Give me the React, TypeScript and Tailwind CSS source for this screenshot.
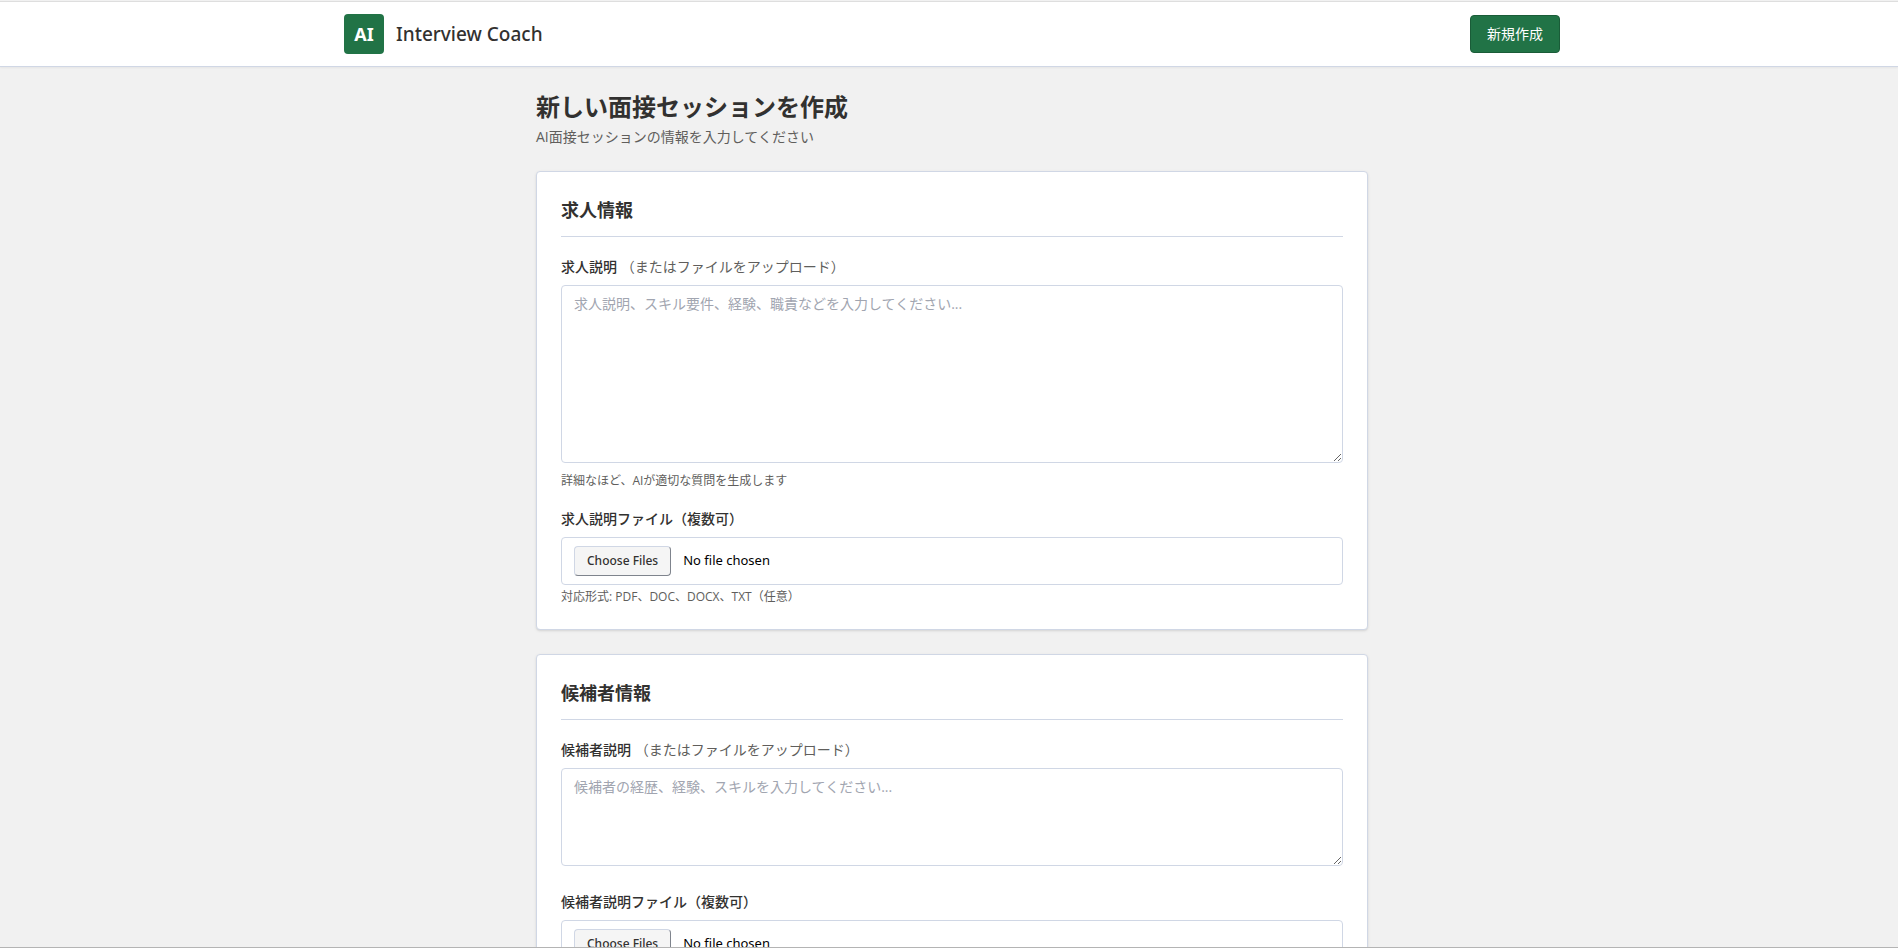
import React from "react";

type SectionProps = {
	id: string;
	title: string;
	label: string;
	placeholder: string;
	rows: number;
	hint?: string;
	fileLabel: string;
};

const sections: SectionProps[] = [
	{
		id: "job",
		title: "求人情報",
		label: "求人説明",
		placeholder: "求人説明、スキル要件、経験、職責などを入力してください...",
		rows: 8,
		hint: "詳細なほど、AIが適切な質問を生成します",
		fileLabel: "求人説明ファイル（複数可）",
	},
	{
		id: "candidate",
		title: "候補者情報",
		label: "候補者説明",
		placeholder: "候補者の経歴、経験、スキルを入力してください...",
		rows: 4,
		fileLabel: "候補者説明ファイル（複数可）",
	},
];

function Header() {
	return (
		<header className="mt-px shrink-0 border-y border-t-[#dedede] border-b-[#d0d7e5] bg-white pl-1.5 font-['Noto_Sans','Noto_Sans_CJK_JP',sans-serif] shadow-xs">
			<div className="mx-auto flex h-16 max-w-7xl items-center justify-between px-8">
				<a href="#" className="flex items-center gap-3">
					<span className="flex size-10 items-center justify-center rounded-sm bg-[#217346] text-lg font-bold text-white">
						AI
					</span>
					<span className="text-[19px] font-medium text-[#323130]">Interview Coach</span>
				</a>
				<button
					type="button"
					className="rounded-sm border border-[#1a5c38] bg-[#217346] px-4 py-2 text-sm text-white"
				>
					新規作成
				</button>
			</div>
		</header>
	);
}

function FormSection({ id, title, label, placeholder, rows, hint, fileLabel }: SectionProps) {
	return (
		<section className="rounded-sm border border-[#d0d7e5] bg-white p-6 shadow-sm">
			<h2 className="border-b border-[#d0d7e5] pb-3 text-lg leading-7 font-semibold">{title}</h2>

			<div className="mt-5 flex flex-col gap-5">
				<div>
					<label htmlFor={`${id}-text`} className="mb-2 block text-sm font-medium">
						{label} <span className="font-normal text-[#605e5c]">（またはファイルをアップロード）</span>
					</label>
					<textarea
						id={`${id}-text`}
						rows={rows}
						placeholder={placeholder}
						className="mb-1.5 block w-full rounded-sm border border-[#d0d7e5] bg-white px-3 py-2 text-sm placeholder:text-[#a1a5b0]"
					/>
					{hint && <p className="mt-2.5 text-xs text-[#605e5c]">{hint}</p>}
				</div>

				<div>
					<label htmlFor={`${id}-files`} className="mb-2 block text-sm font-medium">
						{fileLabel}
					</label>
					<input
						id={`${id}-files`}
						type="file"
						multiple
						accept=".pdf,.doc,.docx,.txt"
						className="block w-full rounded-sm border border-[#d0d7e5] bg-white px-3 py-2 font-['Noto_Sans','Noto_Sans_CJK_JP',sans-serif] text-[13px] text-black file:mr-3 file:rounded-sm file:border file:border-t-[#d0d7e5] file:border-r-[#7f848d] file:border-b-[#7f848d] file:border-l-[#d0d7e5] file:bg-[#f5f5f5] file:px-3 file:py-1.5 file:text-xs file:font-medium file:text-[#323130]"
					/>
					<p className="mt-1 text-xs text-[#605e5c]">対応形式: PDF、DOC、DOCX、TXT（任意）</p>
				</div>
			</div>
		</section>
	);
}

export default function App() {
	return (
		<div className="flex h-screen flex-col border-b border-[#b4b4b4] bg-[#f1f1f1] font-['Open_Sans','Noto_Sans_CJK_JP',sans-serif] text-[#323130]">
			<Header />
			<main className="min-h-0 flex-1 overflow-y-auto pl-1.5 [scrollbar-width:none]">
				<div className="mx-auto max-w-4xl px-8 py-6">
					<h1 className="text-2xl font-semibold">新しい面接セッションを作成</h1>
					<p className="mt-1 text-sm text-[#605e5c]">AI面接セッションの情報を入力してください</p>
					<form className="mt-6 flex flex-col gap-6">
						{sections.map((section) => (
							<FormSection key={section.id} {...section} />
						))}
					</form>
				</div>
			</main>
		</div>
	);
}
